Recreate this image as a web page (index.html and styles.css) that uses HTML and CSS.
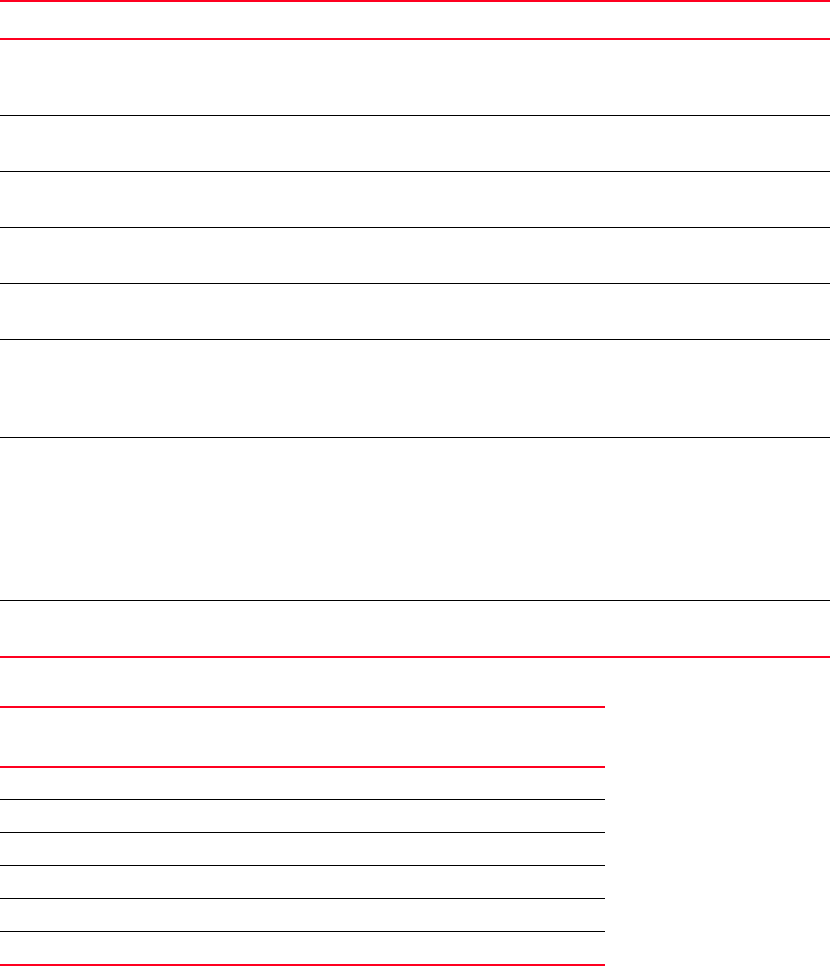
FILE: index.html
```html
<!DOCTYPE html>
<html lang="en">
<head>
<meta charset="utf-8">
<title>Tables</title>
<link rel="stylesheet" href="styles.css">
</head>
<body>
<div class="page">
  <section class="table wide">
    <div class="head h36"></div>
    <div class="row h75"></div>
    <div class="row h55"></div>
    <div class="row h55"></div>
    <div class="row h55"></div>
    <div class="row h55"></div>
    <div class="row h97"></div>
    <div class="row h162"></div>
    <div class="row last h55"></div>
  </section>
  <section class="table narrow">
    <div class="head h58"></div>
    <div class="row h31"></div>
    <div class="row h32"></div>
    <div class="row h32"></div>
    <div class="row h32"></div>
    <div class="row h32"></div>
    <div class="row last h32"></div>
  </section>
</div>
</body>
</html>
```
FILE: styles.css
```css
html, body {
  margin: 0;
  padding: 0;
  background: #ffffff;
  font-family: "Liberation Sans", Arial, sans-serif;
}
.page {
  display: flex;
  flex-direction: column;
  gap: 48px;
  width: 830px;
}
.table {
  display: flex;
  flex-direction: column;
  border-top: 2px solid #ff0020;
}
.wide { width: 830px; }
.narrow { width: 605px; }
.head {
  border-bottom: 2px solid #ff0020;
}
.row {
  border-bottom: 1px solid #000000;
}
.row.last {
  border-bottom: 2px solid #ff0020;
}
.h31 { height: 31px; }
.h32 { height: 32px; }
.h36 { height: 36px; }
.h55 { height: 55px; }
.h58 { height: 58px; }
.h75 { height: 75px; }
.h97 { height: 97px; }
.h162 { height: 162px; }
```
